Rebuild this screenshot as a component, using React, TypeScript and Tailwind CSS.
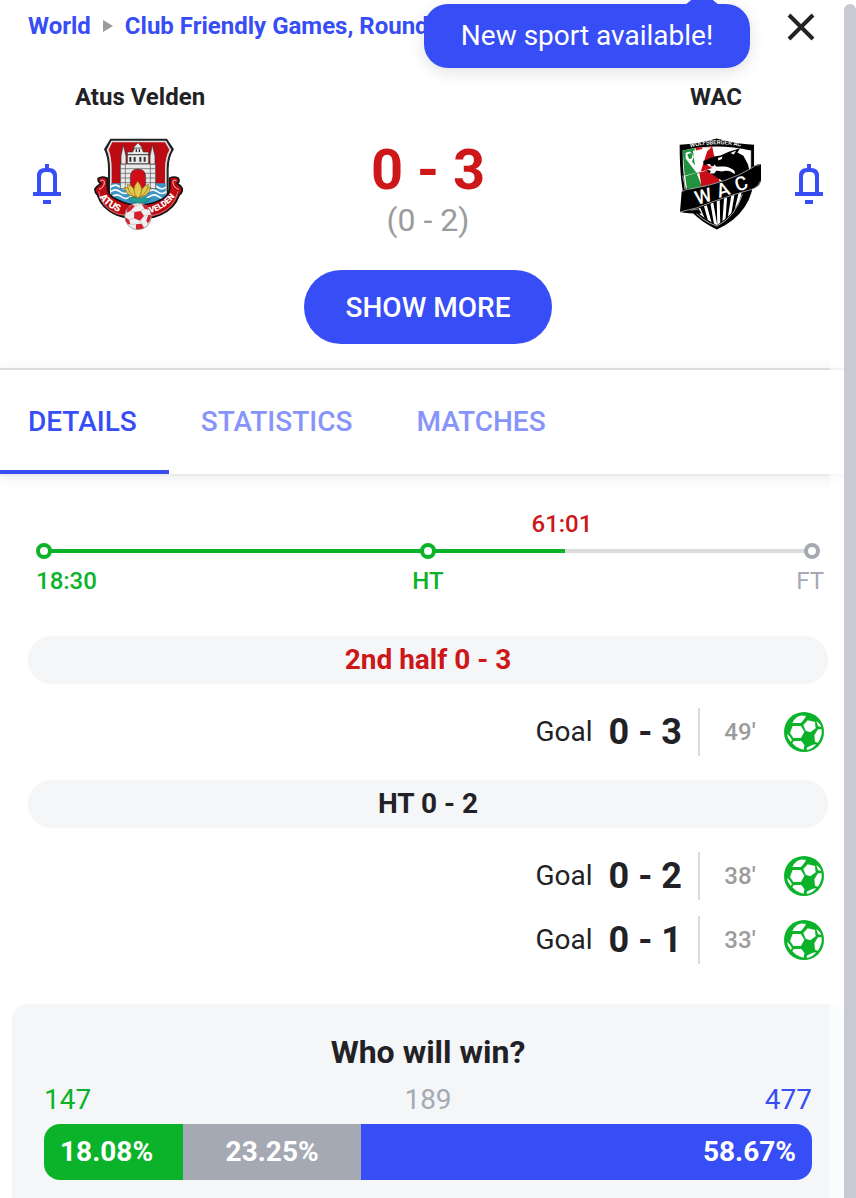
import React, { useState } from 'react';

const tabs = ['DETAILS', 'STATISTICS', 'MATCHES'];

const votes = [
  { count: 147, percent: 18.08 },
  { count: 189, percent: 23.25 },
  { count: 477, percent: 58.67 },
];

const elapsed = (61 / 90) * 100;

const BellIcon = () => (
  <svg width="28" height="40" viewBox="0 0 28 40" fill="none">
    <path d="M12 0h4v5h-4z" fill="#374df5" />
    <path d="M4 29V12Q4 4 12 4H16Q24 4 24 12V29H20V13Q20 8 15 8H13Q8 8 8 13V29Z" fill="#374df5" />
    <path d="M8 26V28H5ZM20 26V28H23ZM0 28h28v4H0zM10 36h8v4h-8z" fill="#374df5" />
  </svg>
);

const BallIcon = () => (
  <svg width="40" height="40" viewBox="24 24 120 120">
    <circle cx="84" cy="84" r="60" fill="#0bb32a" />
    <g fill="#fff">
      <path d="M49 57Q55 43 68 37Q78 33 90 36L85 45L75 57Z" />
      <path d="M50 66H75L85 83L75 102H52L42 87Z" />
      <path d="M82 63L95 49L117 54L119 73L103 85L89 80Z" />
      <path d="M121 51Q132 58 136 69L126 67Z" />
      <path d="M115 94L126 76H137Q139 98 126 116L117 113Z" />
      <path d="M92 131L110 122L121 121Q110 135 93 138Z" />
      <path d="M52 112L75 110L85 122L83 137Q62 133 49 118Z" />
      <path d="M33 90L40 96L48 108L44 113Q34 102 33 90Z" />
    </g>
  </svg>
);

const VeldenCrest = () => (
  <svg width="89" height="92" viewBox="222 27 267 276" fontFamily="Roboto, sans-serif">
    <defs>
      <path id="ribbon-left" d="M238 204Q264 246 322 254" />
      <path id="ribbon-right" d="M390 252Q442 240 474 190" />
    </defs>
    <path d="M271 29H441L462 61Q446 84 446 120V198Q432 235 355 252Q280 235 264 198V120Q264 84 252 61Z" fill="#222" />
    <path d="M274 35H438L454 62Q440 85 440 120V198Q426 229 355 246Q286 229 270 198V120Q270 85 260 62Z" fill="#ddd" />
    <path d="M277 40H435L448 62Q435 85 435 120V200H275V120Q275 85 266 62Z" fill="#bd0b14" />
    {/* waves */}
    <path d="M273 163H437V205Q410 240 355 243Q290 235 273 205Z" fill="#3d95c8" />
    <path d="M272 174q14-11 28 0t28 0t28 0t28 0t28 0t26 0M272 188q14-11 28 0t28 0t28 0t28 0t28 0t26 0M276 203q14-11 28 0t28 0t28 0t28 0t28 0t20 0" fill="none" stroke="#fff" strokeWidth="5" />
    {/* castle */}
    <g fill="#e9e9e9" stroke="#333" strokeWidth="2">
      <path d="M301 105H407V179H301Z" />
      <path d="M303 105V81L310 48L318 81V105ZM390 105V81L397 48L405 81V105Z" />
      <path d="M322 104V69H338L344 56H365L370 69H386V104Z" />
      <path d="M339 57L354 41L368 57Z" />
    </g>
    <path d="M302 119H406M302 133H406M302 147H332M376 147H406M302 161H332M376 161H406M316 105V179M391 105V179" stroke="#555" strokeWidth="2" fill="none" />
    <path d="M320 77H388" stroke="#333" strokeWidth="3" />
    <path d="M328 84h6v14h-6zM341 84h6v14h-6zM358 84h6v14h-6zM371 84h6v14h-6zM347 61h4v8h-4zM356 61h4v8h-4z" fill="#333" />
    <path d="M331 177V145Q331 120 354 120Q377 120 377 145V177Z" fill="#d10c18" stroke="#444" strokeWidth="2" />
    {/* ribbon */}
    <path d="M262 148Q246 140 235 148Q232 158 242 164Q231 171 225 180Q224 190 232 197Q246 239 289 257Q325 271 355 265Q388 273 421 257Q464 239 478 197Q488 191 487 179Q483 169 472 164Q480 156 475 148Q462 140 449 148V178Q449 204 410 218Q380 228 355 228Q327 228 300 216Q262 201 262 177Z" fill="#bd0b14" stroke="#111" strokeWidth="5" />
    <path d="M236 187Q242 236 293 255Q326 264 355 260Q390 264 418 254Q463 236 474 187" fill="none" stroke="#e8a6a6" strokeWidth="2" />
    <path d="M241 155Q254 150 253 162Q252 176 237 181M469 155Q457 150 459 162Q461 176 476 181" fill="none" stroke="#f1c7c7" strokeWidth="3" />
    {/* water lily */}
    <path d="M326 207Q340 202 354 208Q374 202 391 210Q380 223 355 222Q333 223 326 207Z" fill="#20a29a" stroke="#126f6b" strokeWidth="2" />
    <g fill="#e5c84d" stroke="#776315" strokeWidth="2">
      <path d="M313 176Q333 172 350 204Q324 206 313 176ZM393 176Q374 172 356 204Q382 206 393 176Z" />
      <path d="M322 166Q344 170 352 206Q324 196 322 166ZM386 166Q366 170 354 206Q381 196 386 166Z" />
      <path d="M353 157Q377 182 354 209Q330 184 353 157Z" />
    </g>
    <text fontSize="30" fontWeight="900" fill="#fff">
      <textPath href="#ribbon-left">ATUS</textPath>
    </text>
    <text fontSize="25" fontWeight="900" fill="#fff">
      <textPath href="#ribbon-right">VELDEN</textPath>
    </text>
    <circle cx="354" cy="262" r="40" fill="#eee" stroke="#777" strokeWidth="2" />
    <g fill="#d3202c">
      <path d="M343 249L362 246L372 261L360 275L342 268Z" />
      <path d="M323 236L337 227L345 231L331 246L319 252ZM365 224L381 232L385 242L373 239ZM316 265L327 272L331 286L324 286Q315 276 316 265ZM348 286L365 284L372 296Q360 303 348 300ZM385 257L393 259Q392 276 383 283L379 275Z" />
    </g>
    <path d="M343 249L331 246M362 246L373 239M372 261L385 257M360 275L365 284M342 268L327 272M345 231L365 224M331 286L348 286" stroke="#bbb" strokeWidth="2" />
  </svg>
);

const WacCrest = () => (
  <svg width="83" height="92" viewBox="58 24 250 276" fontFamily="Roboto, sans-serif">
    <defs>
      <clipPath id="wac-lower">
        <path d="M104 238L248 184Q239 243 172 286Q127 262 104 238Z" />
      </clipPath>
      <path id="wac-top" d="M92 52Q172 32 258 52" />
    </defs>
    <path d="M60 44Q118 41 172 25Q227 41 284 44V130Q284 247 172 299Q102 264 80 222Q60 170 60 44Z" fill="#000" />
    <path d="M69 61Q170 37 274 61V126L80 184Q69 140 69 61Z" fill="#fff" />
    {/* coloured fields */}
    <path d="M69 61L105 54L112 127L75 137ZM77 139L124 124L131 172L82 178Z" fill="#21933f" />
    <path d="M108 53L158 49L180 155L125 168Z" fill="#ca0c16" />
    <path d="M109 128L100 62Q137 57 127 51H156L143 63L123 126L112 132L125 164L119 128L160 116Z" fill="#fff" />
    <path d="M78 68L91 64L103 80L97 94L111 112L108 125L78 85Z" fill="#fff" />
    <path d="M83 73Q98 64 98 77Q97 90 88 86Z" fill="#21933f" />
    <path d="M123 132L174 142L177 159L126 169Z" fill="#ca0c16" />
    {/* wolf */}
    <path d="M131 93L164 79L183 76L208 65L242 54L234 67L252 77L266 103L272 130L190 153L170 142Q164 133 151 131L142 121L150 116L157 123L190 119L216 118L228 130Q218 112 197 109L160 111L148 102L133 106Z" fill="#000" />
    <path d="M175 84L189 79L187 87L177 91ZM213 69L230 61L223 73Z" fill="#fff" />
    <path d="M141 103L151 102L155 109L162 108L165 103L171 110H190L215 116Q230 122 225 132Q209 117 187 124L171 121L164 130L150 130L154 122L142 119L158 114Z" fill="#fff" />
    <path d="M69 137Q77 163 76 181M274 60V113" stroke="#fff" strokeWidth="2" fill="none" />
    {/* stripes */}
    <g clipPath="url(#wac-lower)" stroke="#fff" strokeWidth="9">
      <path d="M113 224L141 290M134 215L155 290M155 208L170 295M176 200L178 295M199 192L192 294M222 184L205 290M245 178L220 280" />
    </g>
    <path d="M94 233Q124 272 172 289Q228 261 249 193" fill="none" stroke="#fff" strokeWidth="2" />
    <path d="M66 185Q71 174 93 176Q200 158 272 116Q287 102 305 102V151Q302 173 274 179Q202 200 117 236L126 251Q82 251 61 246Z" fill="#000" />
    <path d="M68 185Q78 176 93 177Q200 159 272 117Q284 105 304 103M62 246Q112 237 158 216Q218 194 274 179Q296 173 302 155M93 241L118 237" fill="none" stroke="#ddd" strokeWidth="2" />
    <g fill="#fff" fontSize="58" fontWeight="500" textAnchor="middle">
      <text transform="translate(137 218) rotate(-16)">W</text>
      <text transform="translate(197 198) rotate(-18)">A</text>
      <text transform="translate(252 180) rotate(-20)">C</text>
    </g>
    <text fontSize="18" fontWeight="500" fill="#fff">
      <textPath href="#wac-top">WOLFSBERGER AC</textPath>
    </text>
  </svg>
);

const Goal = ({ score, minute }: { score: string; minute: string }) => (
  <div className="flex items-center justify-end h-12 pr-1">
    <span className="text-[28px]">Goal</span>
    <span className="mx-4 text-4xl font-bold">{score}</span>
    <span className="h-12 w-[2px] bg-[#dcdcdc]"></span>
    <span className="w-20 text-center text-2xl font-medium text-[#9b9b9b]">{minute}</span>
    <span className="ml-1">
      <BallIcon />
    </span>
  </div>
);

const App = () => {
  const [activeTab, setActiveTab] = useState('DETAILS');

  return (
    <div className="relative flex flex-col min-h-screen bg-white text-[#222226] font-['Roboto',sans-serif] overflow-hidden">
      <header className="relative flex items-start justify-between h-[81px] pl-7 pr-10">
        <nav className="flex items-center mt-[10px] text-2xl font-bold text-[#374df5] whitespace-nowrap">
          <a href="#world">World</a>
          <svg className="mx-3" width="10" height="12" viewBox="0 0 10 12">
            <path d="M0 0L10 6L0 12Z" fill="#9b9b9b" />
          </svg>
          <a href="#tournament">Club Friendly Games, Round</a>
        </nav>
        <button aria-label="Close" className="mt-3">
          <svg width="30" height="30" viewBox="0 0 30 30" fill="none" stroke="#222226" strokeWidth="4">
            <path d="M3 3L27 27M27 3L3 27" />
          </svg>
        </button>
        <div className="absolute top-1 right-[106px] w-[326px] h-16 flex items-center justify-center rounded-3xl bg-[#374df5] text-white text-[28px] shadow-[0_4px_16px_rgba(0,0,0,0.12)] whitespace-nowrap">
          <svg className="absolute -top-3 right-7" width="40" height="14" viewBox="0 0 40 14">
            <path d="M0 14Q4 13 8 9L16 2Q20-1 24 2L32 9Q36 13 40 14Z" fill="#374df5" />
          </svg>
          New sport available!
        </div>
      </header>

      <section className="flex justify-between px-[33px]">
        <div className="flex flex-col items-center w-[214px]">
          <h2 className="text-2xl font-bold leading-8">Atus Velden</h2>
          <div className="flex items-center w-full mt-[25px]">
            <button aria-label="Follow Atus Velden" className="mr-[33px]">
              <BellIcon />
            </button>
            <VeldenCrest />
          </div>
        </div>
        <div className="flex flex-col items-center pt-[61px]">
          <div className="text-[56px] leading-[56px] font-bold text-[#cd1719]">0 - 3</div>
          <div className="text-[32px] leading-[44px] text-[#9b9b9b]">(0 - 2)</div>
        </div>
        <div className="flex flex-col items-center w-[214px]">
          <h2 className="text-2xl font-bold leading-8">WAC</h2>
          <div className="flex items-center justify-end w-full mt-[25px]">
            <WacCrest />
            <button aria-label="Follow WAC" className="ml-[33px]">
              <BellIcon />
            </button>
          </div>
        </div>
      </section>

      <button className="self-center mt-7 mb-6 pt-[2px] h-[74px] w-[248px] rounded-full bg-[#374df5] text-white text-[28px] font-medium">
        SHOW MORE
      </button>

      <div className="flex h-[108px] border-t-2 border-t-[#dcdcdc] border-b-2 border-b-[#ebebeb] shadow-[0_2px_12px_rgba(0,0,0,0.08)]">
        {tabs.map((tab) => (
          <button
            key={tab}
            onClick={() => setActiveTab(tab)}
            className={`px-8 pt-1 first:pl-7 text-[28px] font-medium border-b-4 ${
              activeTab === tab ? 'text-[#374df5] border-[#374df5]' : 'text-[#8794fa] border-transparent'
            }`}
          >
            {tab}
          </button>
        ))}
      </div>

      <section className="mt-8 text-2xl">
        <div className="relative h-8 ml-9 mr-11 text-[#cd1719] font-medium">
          <span className="absolute -translate-x-1/2" style={{ left: `${elapsed}%` }}>61:01</span>
        </div>
        <div className="relative flex items-center justify-between mx-9 mt-[3px] h-4">
          <div className="absolute inset-x-2 h-1 bg-[#dcdcdc]">
            <div className="h-1 bg-[#0bb32a]" style={{ width: `${elapsed}%` }}></div>
          </div>
          <span className="relative size-4 rounded-full border-4 border-[#0bb32a] bg-white"></span>
          <span className="relative size-4 rounded-full border-4 border-[#0bb32a] bg-white"></span>
          <span className="relative size-4 rounded-full border-4 border-[#a5a9b4] bg-white"></span>
        </div>
        <div className="grid grid-cols-3 px-8 mt-[6px] font-medium text-[#0bb32a]">
          <span className="pl-1">18:30</span>
          <span className="text-center">HT</span>
          <span className="text-right font-normal text-[#a5a9b4]">FT</span>
        </div>
      </section>

      <section className="flex flex-col mx-7 mt-[39px]">
        <h3 className="flex items-center justify-center h-12 rounded-full bg-[#f4f6f8] text-[28px] font-bold text-[#cd1719]">
          2nd half 0 - 3
        </h3>
        <div className="my-6">
          <Goal score="0 - 3" minute="49'" />
        </div>
        <h3 className="flex items-center justify-center h-12 rounded-full bg-[#f4f6f8] text-[28px] font-bold">
          HT 0 - 2
        </h3>
        <div className="flex flex-col gap-4 mt-6">
          <Goal score="0 - 2" minute="38'" />
          <Goal score="0 - 1" minute="33'" />
        </div>
      </section>

      <section className="grow mx-3 mt-10 px-8 pt-7 pb-4 rounded-t-2xl bg-[#f4f6f8]">
        <h2 className="text-[32px] leading-10 font-bold text-center">Who will win?</h2>
        <div className="grid grid-cols-3 mt-2 text-[28px] leading-10">
          <span className="text-[#0bb32a]">{votes[0].count}</span>
          <span className="text-center text-[#a5a9b4]">{votes[1].count}</span>
          <span className="text-right text-[#374df5]">{votes[2].count}</span>
        </div>
        <div className="flex items-center h-14 mt-1 rounded-2xl overflow-hidden text-[28px] leading-[56px] font-bold text-white">
          <div className="pl-4 bg-[#0bb32a]" style={{ width: `${votes[0].percent}%` }}>18.08%</div>
          <div className="text-center bg-[#a5a9b4]" style={{ width: `${votes[1].percent}%` }}>23.25%</div>
          <div className="pr-4 text-right bg-[#374df5]" style={{ width: `${votes[2].percent}%` }}>58.67%</div>
        </div>
      </section>

      {/* scrollbar */}
      <div className="absolute inset-y-0 right-0 w-[26px] pt-1 pl-[14px] bg-white/65">
        <div className="h-full rounded-t-full bg-[#c8cad3]"></div>
      </div>
    </div>
  );
};

export default App;
